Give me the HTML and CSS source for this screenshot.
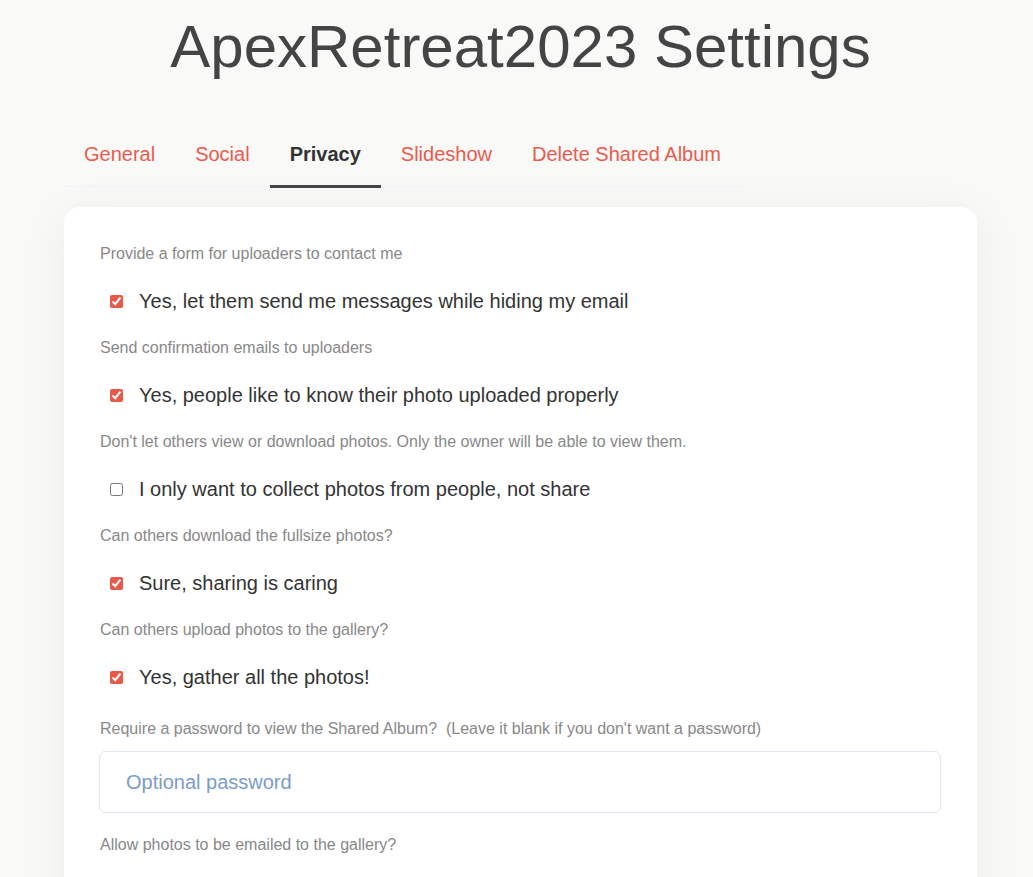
FILE: index.html
```html
<!DOCTYPE html>
<html lang="en">
<head>
<meta charset="utf-8">
<title>ApexRetreat2023 Settings</title>
<link rel="stylesheet" href="styles.css">
</head>
<body>
<div class="page">
  <h1 class="title">ApexRetreat2023 Settings</h1>
  <nav class="tabs">
    <a class="tab" href="#">General</a>
    <a class="tab" href="#">Social</a>
    <a class="tab active" href="#">Privacy</a>
    <a class="tab" href="#">Slideshow</a>
    <a class="tab" href="#">Delete Shared Album</a>
  </nav>
  <div class="card">
    <div class="field">
      <div class="label">Provide a form for uploaders to contact me</div>
      <label class="check"><input type="checkbox" checked><span>Yes, let them send me messages while hiding my email</span></label>
    </div>
    <div class="field">
      <div class="label">Send confirmation emails to uploaders</div>
      <label class="check"><input type="checkbox" checked><span>Yes, people like to know their photo uploaded properly</span></label>
    </div>
    <div class="field">
      <div class="label">Don't let others view or download photos. Only the owner will be able to view them.</div>
      <label class="check"><input type="checkbox"><span>I only want to collect photos from people, not share</span></label>
    </div>
    <div class="field">
      <div class="label">Can others download the fullsize photos?</div>
      <label class="check"><input type="checkbox" checked><span>Sure, sharing is caring</span></label>
    </div>
    <div class="field">
      <div class="label">Can others upload photos to the gallery?</div>
      <label class="check"><input type="checkbox" checked><span>Yes, gather all the photos!</span></label>
    </div>
    <div class="field field-password">
      <div class="label label-tight">Require a password to view the Shared Album?&nbsp; (Leave it blank if you don't want a password)</div>
      <input class="text-input" type="text" placeholder="Optional password">
    </div>
    <div class="field">
      <div class="label">Allow photos to be emailed to the gallery?</div>
    </div>
  </div>
</div>
</body>
</html>
```
FILE: styles.css
```css
html, body {
  margin: 0;
  padding: 0;
  background: #f9f9f8;
  font-family: "Liberation Sans", Arial, sans-serif;
}
.page {
  padding: 0 56px 40px 64px;
}
.title {
  margin: 0;
  padding-top: 9px;
  text-align: center;
  font-size: 60px;
  font-weight: normal;
  line-height: 76px;
  color: #444;
}
.tabs {
  display: inline-flex;
  margin-top: 45px;
  border-bottom: 1px solid #eef2f9;
}
.tab {
  display: block;
  padding: 0 20px;
  height: 56px;
  line-height: 48px;
  font-size: 20px;
  color: #ea5b4d;
  text-decoration: none;
  position: relative;
}
.tab.active {
  color: #333;
  font-weight: bold;
}
.tab.active::after {
  content: "";
  position: absolute;
  left: 0;
  right: 0;
  bottom: -2px;
  height: 3px;
  background: #444;
}
.card {
  margin-top: 20px;
  background: #fff;
  border-radius: 16px;
  box-shadow: 0 10px 50px rgba(0, 0, 0, 0.06);
  padding: 37px 36px 60px 35px;
}
.field {
  display: flex;
  flex-direction: column;
}
.field-password {
  margin-top: 5px;
}
.label {
  font-size: 16px;
  line-height: 20px;
  color: #888;
  margin-bottom: 22px;
  padding-left: 1px;
}
.label-tight {
  margin-bottom: 12px;
}
.check {
  display: flex;
  align-items: center;
  height: 30px;
  margin-bottom: 22px;
  font-size: 20px;
  color: #333;
}
.check input {
  width: 13px;
  height: 13px;
  margin: 0 16px 0 11px;
  accent-color: #e8594a;
}
.text-input {
  box-sizing: border-box;
  height: 62px;
  width: 100%;
  border: 1px solid #dfe7f2;
  border-radius: 6px;
  padding: 0 26px;
  font-family: "Liberation Sans", Arial, sans-serif;
  font-size: 20px;
  color: #333;
  margin-bottom: 22px;
  outline: none;
}
.text-input::placeholder {
  color: #7b9cc7;
}
```
